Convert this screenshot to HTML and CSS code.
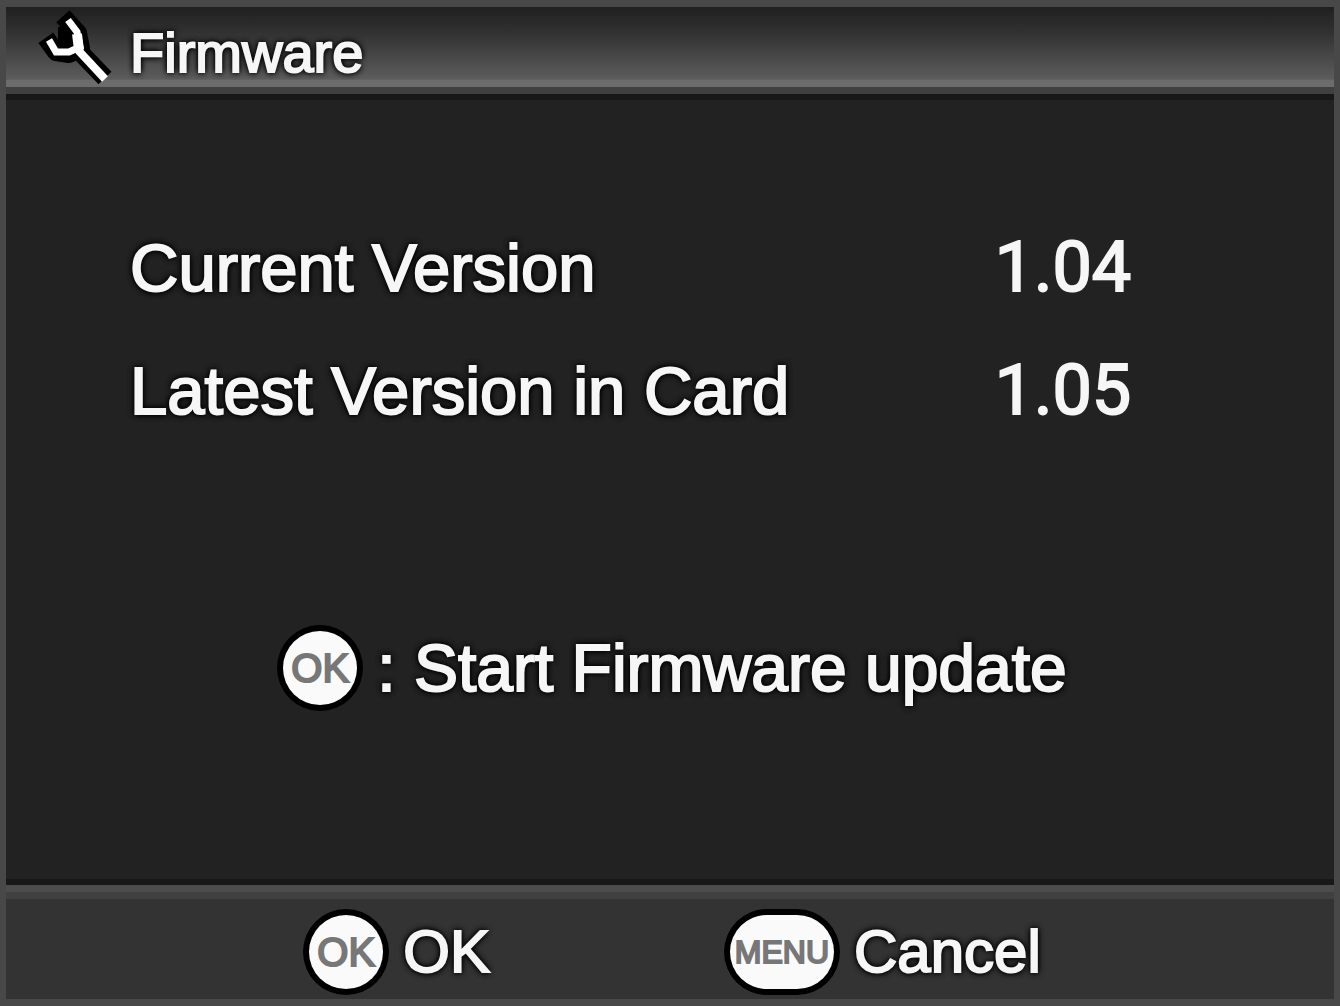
FILE: index.html
```
<!DOCTYPE html>
<html lang="en">
<head>
    <meta charset="UTF-8">
    <meta name="viewport" content="width=device-width, initial-scale=1.0">
    <title>Firmware</title>
    <link rel="stylesheet" href="styles.css">
</head>
<body>
    <header class="header">
        <svg class="wrench" viewBox="0 0 76 84" aria-hidden="true">
            <g fill="none" stroke="#000" stroke-width="18" stroke-linejoin="round">
                <path d="M29 16 L38 26 L41 41 L29 47 L16 45 L11 38" stroke-linecap="square"/>
                <path d="M41 46 L65 71"/>
            </g>
            <path d="M18 20h14v18h-14z" fill="#000"/>
            <g fill="none" stroke="#fff" stroke-width="7">
                <path d="M28 13 L37 25 L40 40 L29 45 L16 45 L9 33"/>
                <path d="M37 27 L39 43" stroke-width="10"/>
                <path d="M38 43 L65 72" stroke-width="8"/>
            </g>
        </svg>
        <h1 class="title">Firmware</h1>
    </header>

    <main class="main">
        <table class="versions">
            <tr>
                <th scope="row">Current Version</th>
                <td>1.04</td>
            </tr>
            <tr>
                <th scope="row">Latest Version in Card</th>
                <td>1.05</td>
            </tr>
        </table>
        <button type="button" class="start">
            <span class="badge">OK</span>
            <span>: Start Firmware update</span>
        </button>
    </main>

    <footer class="footer">
        <button type="button" class="key"><span class="badge">OK</span>OK</button>
        <button type="button" class="key"><span class="badge badge_menu">MENU</span>Cancel</button>
    </footer>
</body>
</html>
```
FILE: styles.css
```
*{
    box-sizing: border-box;
}
body{
    margin: 0;
    min-height: 100vh;
    display: flex;
    flex-direction: column;
    border: 7px solid #484848;
    border-left-width: 6px;
    border-right-width: 6px;
    background-color: #222;
    color: #f6f6f6;
    font-family: "Liberation Sans", Arial, Helvetica, sans-serif;
    -webkit-text-stroke: 2px #f6f6f6;
    text-shadow: 0 0 6px black, 0 0 6px black, 0 0 6px black;
}
button{
    padding: 0;
    border: 0;
    background: none;
    color: inherit;
    font-family: inherit;
    text-shadow: inherit;
    -webkit-text-stroke: inherit;
    cursor: pointer;
}
/* title bar */
.header{
    display: flex;
    align-items: center;
    height: 87px;
    padding: 4px 0 0 34px;
    background: linear-gradient(#202020, #303030 30%, #5c5c5c 90%, #6c6c6c 92%);
    border-bottom: 7px solid #404040;
    box-shadow: 0 6px #181818;
}
.wrench{
    width: 76px;
    height: 84px;
    overflow: visible;
}
.title{
    margin: 0;
    padding: 8px 0 0 14px;
    font-size: 56px;
    line-height: 64px;
    font-weight: normal;
}
.main{
    flex: 1;
    display: flex;
    flex-direction: column;
    align-items: center;
    padding-top: 112px;
    border-bottom: 6px solid #181818;
}
.versions{
    width: 100%;
    border-collapse: collapse;
}
.versions th,
.versions td{
    padding: 0;
    text-align: left;
    vertical-align: baseline;
    font-weight: normal;
    line-height: 122px;
}
.versions th{
    width: 74%;
    padding-left: 124px;
    font-size: 67px;
}
.versions td{
    padding-left: 6px;
    font-family: Roboto, "Liberation Sans", sans-serif;
    font-size: 70px;
    text-shadow: none;
}
.start{
    display: flex;
    align-items: center;
    gap: 20px;
    margin-top: 174px;
    padding-left: 10px;
    font-size: 66px;
    line-height: 84px;
}
/* white key caps with a black ring */
.badge{
    display: flex;
    align-items: center;
    justify-content: center;
    width: 74px;
    height: 74px;
    border-radius: 37px;
    background-color: #fafafa;
    box-shadow: 0 0 0 6px black;
    color: #777;
    font-size: 40px;
    line-height: 40px;
    text-shadow: none;
    -webkit-text-stroke: 2px #777;
}
.badge_menu{
    width: 104px;
    font-size: 32px;
}
.footer{
    display: flex;
    justify-content: center;
    gap: 240px;
    height: 114px;
    padding: 13px 0 0 10px;
    background-color: #333;
    border-top: 7px solid #4c4c4c;
    box-shadow: inset 0 7px #404040;
}
.key{
    display: flex;
    align-items: center;
    gap: 20px;
    font-size: 60px;
    line-height: 68px;
}
```
